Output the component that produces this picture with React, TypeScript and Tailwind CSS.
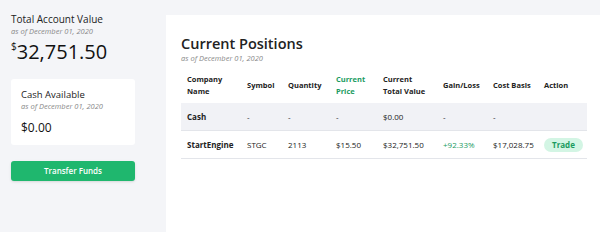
import React from 'react';

const headers = [
  { label: 'Company Name', w: 'w-[66px]', green: false },
  { label: 'Symbol', w: 'w-[41px]', green: false },
  { label: 'Quantity', w: 'w-[48px]', green: false },
  { label: 'Current Price', w: 'w-[47px]', green: true },
  { label: 'Current Total Value', w: 'w-[60px]', green: false },
  { label: 'Gain/Loss', w: 'w-[50px]', green: false },
  { label: 'Cost Basis', w: 'w-[51px]', green: false },
  { label: 'Action', w: 'flex-1', green: false },
];

const Row = ({ cells, shaded }: { cells: React.ReactNode[]; shaded?: boolean }) => (
  <div className={`flex items-center h-[28px] text-[8px] text-[#222] border-b border-[#e3e5ea] ${shaded ? 'bg-[#f1f2f6]' : ''}`}>
    {cells.map((c, i) => (
      <div key={i} className={`${headers[i].w} ${i === 0 ? 'pl-[6px]' : ''}`}>
        {c}
      </div>
    ))}
  </div>
);

const App = () => {
  return (
    <div className="w-[600px] h-[232px] bg-[#f4f5f8] flex overflow-hidden" style={{ fontFamily: '"Open Sans", sans-serif' }}>
      <div className="w-[166px] shrink-0 pl-[11px] pr-[31px]">
        <div className="pt-[13px] text-[10px] text-[#222] leading-[13px]">Total Account Value</div>
        <div className="text-[7.5px] italic text-[#888] leading-[10px]">as of December 01, 2020</div>
        <div className="flex items-start mt-[3px] text-[#111]">
          <span className="text-[10px] leading-[12px] mt-[1px]">$</span>
          <span className="text-[20px] leading-[26px]">32,751.50</span>
        </div>
        <div className="mt-[14px] bg-white rounded-[3px] h-[66px] pl-[10px] pt-[10px]">
          <div className="text-[9.5px] text-[#222] leading-[12px]">Cash Available</div>
          <div className="text-[7.5px] italic text-[#888] leading-[10px]">as of December 01, 2020</div>
          <div className="mt-[9px] text-[12px] text-[#111] leading-[16px]">$0.00</div>
        </div>
        <div className="mt-[16px] h-[20px] bg-[#1fb76e] rounded-[3px] flex items-center justify-center text-white text-[8px] font-semibold shadow-sm">
          Transfer Funds
        </div>
      </div>
      <div className="flex-1 mt-[15px] bg-white pl-[15px] pr-[13px]">
        <div className="pt-[20px] text-[14.5px] font-semibold text-[#222] leading-[18px]">Current Positions</div>
        <div className="text-[7.5px] italic text-[#888] leading-[10px]">as of December 01, 2020</div>
        <div className="mt-[3px] flex items-center h-[37px] text-[7.5px] font-bold leading-[12px]">
          {headers.map((h, i) => (
            <div key={i} className={`${h.w} ${i === 0 ? 'pl-[6px] pr-[14px]' : 'pr-[10px]'} ${h.green ? 'text-[#1a9b5f]' : 'text-[#222]'}`}>
              {h.label}
            </div>
          ))}
        </div>
        <Row shaded cells={[<span className="font-bold">Cash</span>, '-', '-', '-', '$0.00', '-', '-', '']} />
        <Row
          cells={[
            <span className="font-bold">StartEngine</span>,
            'STGC',
            '2113',
            '$15.50',
            '$32,751.50',
            <span className="text-[#1a9b5f]">+92.33%</span>,
            '$17,028.75',
            <span className="inline-block bg-[#d3f5e4] text-[#1a9b5f] font-bold rounded-full px-[8px] py-[2px] leading-[10px]">Trade</span>,
          ]}
        />
      </div>
    </div>
  );
};

export default App;
